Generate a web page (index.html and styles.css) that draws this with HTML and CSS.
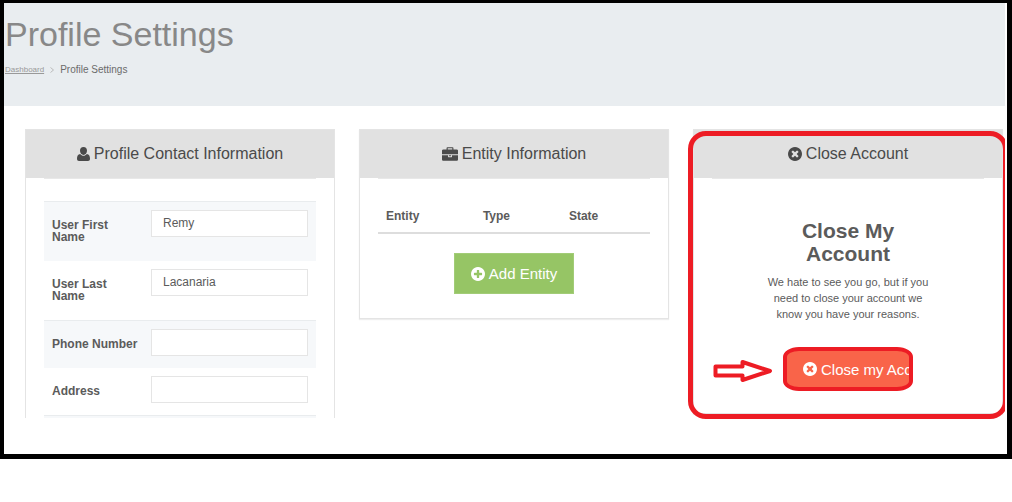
FILE: index.html
```
<!DOCTYPE html>
<html lang="en">
<head>
    <meta charset="UTF-8">
    <meta name="viewport" content="width=device-width, initial-scale=1.0">
    <title>Profile Settings</title>
    <link rel="stylesheet" href="styles.css">
</head>
<body>
    <div class="frame">
        <header class="page-header">
            <h1>Profile Settings</h1>
            <nav class="breadcrumb">
                <a href="#">Dashboard</a>
                <svg class="chevron" viewBox="0 0 4 6"><path d="M0.5 0.5L3.5 3L0.5 5.5"/></svg>
                <span>Profile Settings</span>
            </nav>
        </header>

        <main class="panels">
            <section class="panel panel-open">
                <h2 class="panel-title">
                    <svg class="icon icon-user" viewBox="0 0 13 14"><path d="M6.500 0C8.800 0 10 1.600 10 3.800C10 6 8.500 8 6.500 8C4.500 8 3 6 3 3.800C3 1.600 4.200 0 6.500 0ZM3.200 7C4.100 8.200 5.200 8.800 6.500 8.800C7.800 8.800 8.900 8.200 9.800 7C12.200 7.200 13 9 13 11.800C13 13.200 12.200 14 11 14H2C0.800 14 0 13.200 0 11.800C0 9 0.800 7.200 3.200 7Z"/></svg>
                    Profile Contact Information
                </h2>
                <form class="panel-body contact-form">
                    <div class="form-row">
                        <label for="firstName">User First Name</label>
                        <input type="text" id="firstName" value="Remy">
                    </div>
                    <div class="form-row">
                        <label for="lastName">User Last Name</label>
                        <input type="text" id="lastName" value="Lacanaria">
                    </div>
                    <div class="form-row">
                        <label for="phone">Phone Number</label>
                        <input type="text" id="phone">
                    </div>
                    <div class="form-row">
                        <label for="address">Address</label>
                        <input type="text" id="address">
                    </div>
                    <div class="form-end"></div>
                </form>
            </section>

            <section class="panel">
                <h2 class="panel-title">
                    <svg class="icon icon-case" viewBox="0 0 1792 1536"><path d="M640 256h512v-128h-512v128zm1152 640v480q0 66-47 113t-113 47h-1472q-66 0-113-47t-47-113v-480h672v160q0 26 19 45t45 19h320q26 0 45-19t19-45v-160h672zm-768 0v128h-256v-128h256zm768-480v384h-1792v-384q0-66 47-113t113-47h352v-160q0-40 28-68t68-28h576q40 0 68 28t28 68v160h352q66 0 113 47t47 113z"/></svg>
                    Entity Information
                </h2>
                <div class="panel-body entity">
                    <table>
                        <thead>
                            <tr><th>Entity</th><th>Type</th><th>State</th></tr>
                        </thead>
                    </table>
                    <button type="button" class="btn btn-add">
                        <svg class="icon" viewBox="128 128 1536 1536"><path d="M1344 960v-128q0-26-19-45t-45-19h-256v-256q0-26-19-45t-45-19h-128q-26 0-45 19t-19 45v256h-256q-26 0-45 19t-19 45v128q0 26 19 45t45 19h256v256q0 26 19 45t45 19h128q26 0 45-19t19-45v-256h256q26 0 45-19t19-45zm320-64q0 209-103 385.5t-279.5 279.5-385.5 103-385.5-103-279.5-279.5-103-385.5 103-385.5 279.5-279.5 385.5-103 385.5 103 279.5 279.5 103 385.5z"/></svg>
                        Add Entity
                    </button>
                </div>
            </section>

            <section class="panel highlighted">
                <h2 class="panel-title">
                    <svg class="icon" viewBox="128 128 1536 1536"><path d="M1277 1122q0-26-19-45l-181-181 181-181q19-19 19-45 0-27-19-46l-90-90q-19-19-46-19-26 0-45 19l-181 181-181-181q-19-19-45-19-27 0-46 19l-90 90q-19 19-19 46 0 26 19 45l181 181-181 181q-19 19-19 45 0 27 19 46l90 90q19 19 46 19 26 0 45-19l181-181 181 181q19 19 45 19 27 0 46-19l90-90q19-19 19-46zm387-226q0 209-103 385.5t-279.5 279.5-385.5 103-385.5-103-279.5-279.5-103-385.5 103-385.5 279.5-279.5 385.5-103 385.5 103 279.5 279.5 103 385.5z"/></svg>
                    Close Account
                </h2>
                <div class="panel-body close-account">
                    <h3>Close My Account</h3>
                    <p>We hate to see you go, but if you need to close your account we know you have your reasons.</p>
                    <div class="close-action">
                        <button type="button" class="btn btn-close">
                            <svg class="icon" viewBox="128 128 1536 1536"><path d="M1277 1122q0-26-19-45l-181-181 181-181q19-19 19-45 0-27-19-46l-90-90q-19-19-46-19-26 0-45 19l-181 181-181-181q-19-19-45-19-27 0-46 19l-90 90q-19 19-19 46 0 26 19 45l181 181-181 181q-19 19-19 45 0 27 19 46l90 90q19 19 46 19 26 0 45-19l181-181 181 181q19 19 45 19 27 0 46-19l90-90q19-19 19-46zm387-226q0 209-103 385.5t-279.5 279.5-385.5 103-385.5-103-279.5-279.5-103-385.5 103-385.5 279.5-279.5 385.5-103 385.5 103 279.5 279.5 103 385.5z"/></svg>
                            Close my Account
                        </button>
                        <svg class="arrow" viewBox="0 0 60 24"><path d="M2.5 7.5H29.5V3L57 12L29.5 21V16.5H2.5Z"/></svg>
                    </div>
                </div>
            </section>
        </main>
    </div>
</body>
</html>
```
FILE: styles.css
```
* {
    box-sizing: border-box;
}

body {
    margin: 0;
    background: #fff;
    color: #5b5b5b;
    font-family: "Liberation Sans", Arial, sans-serif;
    font-size: 12px;
}

.frame {
    border: solid #000;
    border-width: 3px 5px 5px 4px;
    padding-right: 2px;
}

.page-header {
    background: #e9edf0;
    padding: 10px 1px 29px;
}

h1 {
    margin: 0;
    color: #888;
    font-size: 34px;
    font-weight: normal;
    line-height: 42px;
}

.breadcrumb {
    display: flex;
    align-items: center;
    gap: 6px;
    margin-top: 8px;
    color: #6b6b6b;
    font-size: 10px;
    line-height: 14px;
}

.breadcrumb a {
    color: #999;
    font-size: 8px;
}

.chevron {
    width: 4px;
    height: 6px;
    fill: none;
    stroke: #bbb;
}

/* panels */
.panels {
    display: grid;
    grid-template-columns: repeat(3, 1fr);
    gap: 24px;
    align-items: start;
    padding: 23px 2px 36px 21px;
    overflow: hidden;
}

.panel {
    border: 1px solid #e4e4e4;
    box-shadow: 0 1px 1px #eee;
}

.panel-open {
    border-bottom: 0;
    box-shadow: none;
}

.panel-title {
    display: flex;
    align-items: center;
    justify-content: center;
    gap: 4px;
    margin: 0;
    background: #e1e1e1;
    color: #4a4a4a;
    font-size: 16px;
    font-weight: normal;
    line-height: 48px;
}

.icon {
    width: 14px;
    height: 14px;
    fill: currentColor;
    flex: none;
}

.icon-user {
    width: 13px;
}

.icon-case {
    width: 16px;
}

.panel-body {
    margin: 0 18px;
    border-top: 1px solid #e8e8e8;
}

/* contact form */
.contact-form {
    padding-top: 22px;
}

.form-row {
    display: grid;
    grid-template-columns: 86px 1fr;
    align-items: start;
    gap: 13px;
    padding: 0 8px;
}

.form-row:nth-child(odd) {
    border-top: 1px solid #e9ecee;
    background: #f6f8fa;
}

.form-row label {
    padding: 17px 0 18px;
    font-weight: bold;
    line-height: 12px;
}

.form-row input {
    width: 100%;
    height: 27px;
    margin-top: 8px;
    padding: 0 11px 2px;
    border: 1px solid #e5e5e5;
    background: #fff;
    color: #5b5b5b;
    font: inherit;
}

.form-end {
    height: 3px;
    border-top: 1px solid #e9ecee;
    background: #f6f8fa;
}

/* entity table */
.entity {
    padding-bottom: 24px;
    text-align: center;
}

.entity table {
    width: 100%;
    margin-top: 29px;
    border-collapse: collapse;
    border-bottom: 2px solid #ddd;
    table-layout: fixed;
}

.entity th {
    width: 31%;
    padding: 0 8px 8px;
    line-height: 16px;
    text-align: left;
}

.entity th:first-child {
    width: 36%;
}

.entity th:not(:first-child) {
    padding-left: 5px;
}

.btn {
    display: inline-flex;
    align-items: center;
    gap: 4px;
    height: 41px;
    padding: 0 16px;
    border: 1px solid;
    color: #fff;
    font-family: inherit;
    font-size: 15px;
    white-space: nowrap;
}

.btn-add {
    margin-top: 19px;
    background: #96c565;
    border-color: #a2cc77;
}

/* close account */
.close-account {
    padding: 40px 0 22px;
    text-align: center;
}

.close-account h3 {
    max-width: 172px;
    margin: 0 auto;
    font-size: 21px;
    line-height: 23px;
}

.close-account p {
    max-width: 172px;
    margin: 9px auto 25px;
    font-size: 11px;
    line-height: 16px;
}

.close-action {
    position: relative;
    width: 130px;
    margin: 0 auto;
}

.btn-close {
    width: 100%;
    height: 44px;
    border: 4px solid #ed1c24;
    border-radius: 16px / 10px;
    background: #f96449;
    overflow: hidden;
}

.arrow {
    position: absolute;
    top: 12px;
    right: 140px;
    width: 60px;
    height: 24px;
    fill: #fff;
    stroke: #ed1c24;
    stroke-width: 4;
    stroke-linejoin: round;
}

.highlighted {
    position: relative;
}

.highlighted::after {
    content: "";
    position: absolute;
    inset: 1px -6px -6px;
    border: 5px solid #ed1c24;
    border-radius: 18px;
    pointer-events: none;
}
```
